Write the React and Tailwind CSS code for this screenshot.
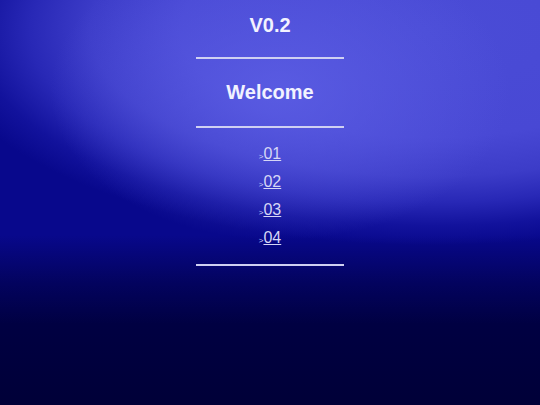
const links = ["01", "02", "03", "04"];

const Divider = ({ className }) => (
  <div className={`w-[148px] h-[2px] bg-[#cfd0f2] ${className}`} />
);

export default function App() {
  return (
    <div className="w-full h-[405px] overflow-hidden font-['Liberation_Sans',Arial,sans-serif] bg-[radial-gradient(ellipse_230px_150px_at_280px_90px,rgba(92,94,228,0.85)_0%,rgba(92,94,228,0)_100%),radial-gradient(ellipse_500px_215px_at_430px_30px,#4a4cd6_0%,#4848d4_50%,#3c3cc8_68%,#2828b6_80%,#12129c_91%,rgba(8,8,140,0)_100%),linear-gradient(to_bottom,#08088c_0%,#08088c_58%,#03035e_70%,#000042_80%,#000038_100%)]">
      <div className="flex flex-col items-center">
        <h1 className="mt-[13px] text-[20px] leading-6 font-bold text-[#f2f2ff]">V0.2</h1>
        <Divider className="mt-[20px]" />
        <h2 className="mt-[21px] text-[20px] leading-6 font-bold text-[#f2f2ff]">Welcome</h2>
        <Divider className="mt-[22px]" />
        <ul className="mt-[12px] flex flex-col items-center">
          {links.map((l) => (
            <li key={l} className="h-[28px] leading-[28px] text-[16px] text-[#d6d6f6]">
              <span className="text-[8px] leading-none">&gt;</span>
              <a href={`#${l}`} className="underline">
                {l}
              </a>
            </li>
          ))}
        </ul>
        <Divider className="mt-[12px]" />
      </div>
    </div>
  );
}
